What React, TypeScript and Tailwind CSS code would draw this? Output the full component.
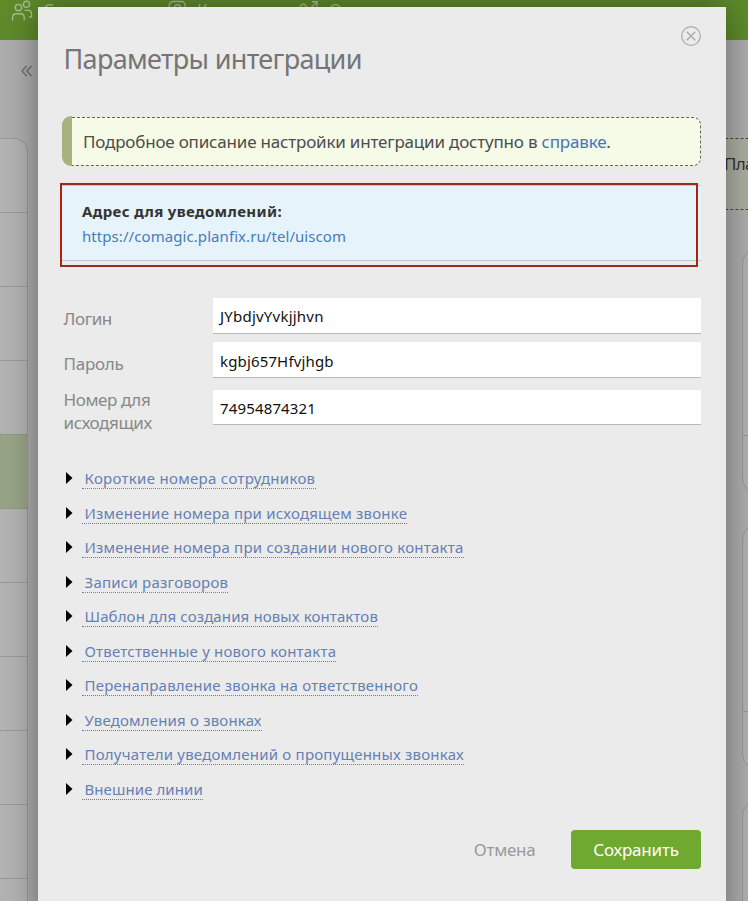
import React from 'react';

const sections = [
  { label: 'Короткие номера сотрудников', style: 'w-[234px] tracking-[0.3px]' },
  { label: 'Изменение номера при исходящем звонке', style: 'w-[325px] tracking-[0.21px]' },
  { label: 'Изменение номера при создании нового контакта', style: 'w-[382px] tracking-[0.22px]' },
  { label: 'Записи разговоров', style: 'w-[146px] tracking-[0.22px]' },
  { label: 'Шаблон для создания новых контактов', style: 'w-[296px] tracking-[0.12px]' },
  { label: 'Ответственные у нового контакта', style: 'w-[254px] tracking-[0.2px]' },
  { label: 'Перенаправление звонка на ответственного', style: 'w-[336px] tracking-[0.21px]' },
  { label: 'Уведомления о звонках', style: 'w-[180px] tracking-[0.18px]' },
  { label: 'Получатели уведомлений о пропущенных звонках', style: 'w-[382px] tracking-[0.21px]' },
  { label: 'Внешние линии', style: 'w-[121px] tracking-[0.08px]' },
];

function PeopleIcon() {
  return (
    <svg className="mt-0 ml-[11px] h-[22px] w-[22px] shrink-0" viewBox="0 0 22 22" fill="none" stroke="#a9bd92" strokeWidth="1.4">
      <circle cx="7.5" cy="7.6" r="3.2" />
      <circle cx="15.5" cy="4.3" r="3.1" />
      <path d="M1.6 20.5v-3.2q0-3.6 3.6-3.6h4.4q3.6 0 3.6 3.6v3.2M13.5 10.4h3.6q3.4 0 3.4 3.4v3.2h-2.6" />
    </svg>
  );
}

function Background() {
  return (
    <div className="h-[901px] w-[748px] overflow-hidden bg-[#adadad]">
      <header className="flex h-10 items-start overflow-hidden bg-[#5f8b2b] text-[17px] leading-[20px] text-[#a9bd92]">
        <PeopleIcon />
        <span className="ml-[10px] w-[124px] shrink-0">Сотрудники</span>
        <svg className="h-[22px] w-[20px] shrink-0" viewBox="0 0 20 22" fill="none" stroke="#a9bd92" strokeWidth="1.4">
          <rect x="2.2" y="1.5" width="16" height="17" rx="4" />
          <circle cx="10.5" cy="7.8" r="3" />
        </svg>
        <span className="ml-[10px] w-[101px] shrink-0">Контакты</span>
        <svg className="h-[22px] w-[22px] shrink-0" viewBox="0 0 22 22" fill="none" stroke="#a9bd92" strokeWidth="1.4">
          <path d="M1.5 6.5L5 4.2q1-.5 1.800.3L11 10l8-8.300M14 1.700h5v5" />
        </svg>
        <span className="ml-[9px]">Отчеты</span>
      </header>
      <div className="flex justify-between">
        <aside className="w-7">
          <div className="flex h-[98px] justify-end pt-[25px]">
            <svg className="-mr-[5px] h-3 w-3 shrink-0" viewBox="0 0 12 12" fill="none" stroke="#6d6d6d" strokeWidth="1.3">
              <path d="M5.7 1L1 6l4.7 5M10.5 1L5.8 6l4.7 5" />
            </svg>
          </div>
          <div className="h-[780px] overflow-hidden rounded-tr-[14px] border-t border-r border-[#999] bg-[#b3b3b3]">
            <div className="h-[74px] border-b border-[#999]" />
            <div className="h-[74px] border-b border-[#999]" />
            <div className="h-[74px] border-b border-[#999]" />
            <div className="h-[74px] border-b border-[#8e9a80]" />
            <div className="h-[74px] border-b border-[#8e9a80] bg-[#98a488]" />
            <div className="h-[74px] border-b border-[#999]" />
            <div className="h-[74px] border-b border-[#999]" />
            <div className="h-[74px] border-b border-[#999]" />
            <div className="h-[74px] border-b border-[#999]" />
            <div className="h-[74px] border-b border-[#999]" />
          </div>
        </aside>
        <main className="w-[28px] overflow-hidden pt-[98px]">
          <div className="h-[72px] w-20 border-y border-dashed border-[#484c38] bg-[#abafa2] pt-[13px] pl-[4px] text-[17px] leading-6 tracking-[-0.7px] text-[#333]">
            Пла
          </div>
          <div className="mt-[38px] ml-[22px] h-[246px] w-20 rounded-[16px] border border-[#999] bg-[#b1b1b1]">
            <div className="h-[187px] border-b border-[#999]" />
          </div>
          <div className="mt-[30px] ml-[22px] h-[246px] w-20 rounded-[16px] border border-[#999] bg-[#b1b1b1]">
            <div className="h-[187px] border-b border-[#999]" />
          </div>
          <div className="mt-[30px] ml-[22px] h-[246px] w-20 rounded-[16px] border border-[#999] bg-[#b1b1b1]" />
        </main>
      </div>
    </div>
  );
}

function Dialog() {
  return (
    <div className="absolute top-[7px] left-[38px] h-[920px] w-[688px] bg-[#ebebeb] pr-[25px] pl-6 shadow-[0_0_32px_rgba(0,0,0,0.4)]">
      <div className="flex h-[109px] items-start justify-between">
        <h1 className="mt-[32px] ml-[1.5px] text-[27px] leading-[40px] tracking-[-0.68px] whitespace-nowrap text-[#757575]">Параметры интеграции</h1>
        <svg className="mt-[19px] h-5 w-5" viewBox="0 0 20 20" fill="none" stroke="#aaa" strokeWidth="1.2">
          <circle cx="10" cy="10" r="9.3" />
          <path d="M5.8 5.8l8.4 8.4M14.2 5.8l-8.4 8.4" strokeWidth="1.4" />
        </svg>
      </div>

      <div className="flex h-[50px] overflow-hidden">
        <div className="w-[10px] rounded-l-[9px] bg-[#a6b37e]" />
        <p className="mt-px flex-1 rounded-r-[8px] border border-l-0 border-dashed border-[#626748] bg-[#f5fbe7] pl-[11px] text-[17px] leading-[48px] tracking-[-0.19px] whitespace-nowrap text-[#4d4d4d]">
          <span>Подробное описание настройки интеграции доступно в <span className="text-[#4576b5]">справке</span>.</span>
        </p>
      </div>

      <div className="relative mt-[19px] h-[76px] border-y border-[#b4cbd6] bg-[#e6f3fa] pt-[13px] pl-5 text-[15px] leading-[25px]">
        <p><b className="tracking-[0.36px] text-[#333]">Адрес для уведомлений:</b></p>
        <p><span className="tracking-[0.07px] text-[#4a7bba]">https://comagic.planfix.ru/tel/uiscom</span></p>
        <div className="absolute -top-[3px] -left-[2px] h-[84px] w-[638px] border-2 border-x-[#ad210d] border-y-[#8f3022]" />
      </div>

      <div className="mt-[37px] grid grid-cols-[151px_488px] text-[17px] leading-[23px] tracking-[-0.4px] text-[#888]">
        <span className="h-11 pt-[9px] pl-[1.5px]">Логин</span>
        <div className="h-9 border-b border-[#b9b9b9] bg-white pl-[7px] text-[15px] leading-[37px] tracking-[0.22px] text-[#111]"><span>JYbdjvYvkjjhvn</span></div>
        <span className="h-12 pt-[10px] pl-[1.5px] tracking-[-0.25px]">Пароль</span>
        <div className="h-9 border-b border-[#b9b9b9] bg-white pl-[7px] text-[15px] leading-[39px] tracking-[0.15px] text-[#111]"><span>kgbj657Hfvjhgb</span></div>
        <span className="-mt-[2px] h-[47px] pl-[1.5px]">Номер для<br />исходящих</span>
        <div className="h-[35px] border-b border-[#b9b9b9] bg-white pl-[7px] text-[15px] leading-[37px] tracking-[0.15px] text-[#111]"><span>74954874321</span></div>
      </div>

      <ul className="mt-[31px] pl-1">
        {sections.map((s) => (
          <li key={s.label} className="flex h-[34.5px] items-start">
            <svg className="mt-[6px] h-3 w-[7px]" viewBox="0 0 7 12"><path d="M0 0L6.5 6L0 12Z" fill="#000" /></svg>
            <span className={`${s.style} ml-[9px] h-[23px] border-b border-dotted border-[#5b7fb8] pl-[2.5px] text-[15px] leading-[24px] whitespace-nowrap text-[#6580b3]`}>
              {s.label}
            </span>
          </li>
        ))}
      </ul>

      <div className="mt-[19px] flex h-[39px] justify-end text-[17px] leading-[39px]">
        <span className="mr-[35.5px] tracking-[-0.25px] text-[#999]">Отмена</span>
        <button className="w-[130px] rounded-[4px] bg-[#6fa92f] tracking-[-0.2px] text-white">Сохранить</button>
      </div>
    </div>
  );
}

export default function App() {
  return (
    <div className="relative h-[901px] w-[748px] overflow-hidden font-['Noto_Sans',sans-serif]">
      <Background />
      <Dialog />
    </div>
  );
}
